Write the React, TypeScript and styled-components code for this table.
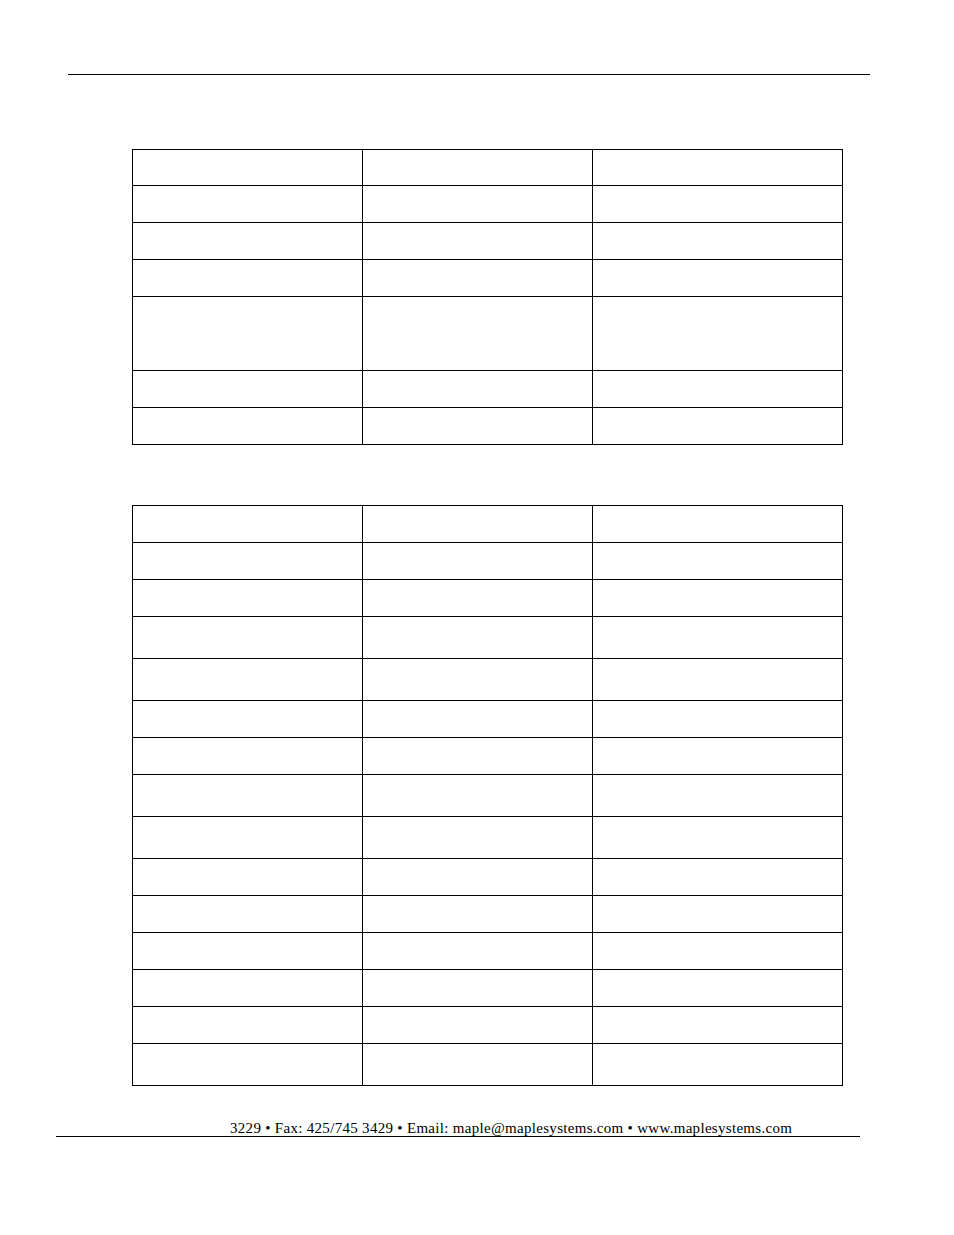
import React from 'react';
import styled, { createGlobalStyle } from 'styled-components';

const GlobalStyle = createGlobalStyle`
  html, body {
    margin: 0;
    padding: 0;
    background: #ffffff;
  }
  body {
    font-family: "Liberation Serif", "Times New Roman", serif;
    color: #000000;
  }
`;

const COLUMNS = [230, 230, 250];

const firstTableRows = [36, 37, 37, 37, 74, 37, 37];
const secondTableRows = [37, 37, 37, 42, 42, 37, 37, 42, 42, 37, 37, 37, 37, 37, 42];

const Page = styled.div`
  width: 954px;
  min-height: 1235px;
  padding-top: 74px;
  box-sizing: border-box;
`;

const HeaderRule = styled.div`
  margin-left: 68px;
  width: 802px;
  border-top: 1px solid #000;
`;

const Grid = styled.div<{ $top: number }>`
  display: grid;
  grid-template-columns: ${COLUMNS.map((c) => `${c}px`).join(' ')};
  width: max-content;
  margin: ${(p) => p.$top}px 0 0 132px;
  border-top: 1px solid #000;
  border-left: 1px solid #000;
`;

const Cell = styled.div<{ $h: number }>`
  box-sizing: border-box;
  height: ${(p) => p.$h}px;
  border-right: 1px solid #000;
  border-bottom: 1px solid #000;
  padding: 4px 6px;
  font-size: 16px;
`;

const Footer = styled.div`
  margin: 35px 0 0 56px;
  width: 804px;
  padding-left: 174px;
  box-sizing: border-box;
  border-bottom: 1px solid #000;
  font-size: 15px;
  letter-spacing: 0.3px;
  line-height: 15px;
  white-space: nowrap;
`;

const SpecTable: React.FC<{ rows: number[]; top: number }> = ({ rows, top }) => (
  <Grid $top={top}>
    {rows.map((h, r) =>
      COLUMNS.map((_, c) => <Cell key={`${r}-${c}`} $h={h} />)
    )}
  </Grid>
);

export default function App() {
  return (
    <>
      <GlobalStyle />
      <Page>
        <HeaderRule />
        <SpecTable rows={firstTableRows} top={74} />
        <SpecTable rows={secondTableRows} top={60} />
        <Footer>
          3229 • Fax: 425/745 3429 • Email: maple@maplesystems.com • www.maplesystems.com
        </Footer>
      </Page>
    </>
  );
}
